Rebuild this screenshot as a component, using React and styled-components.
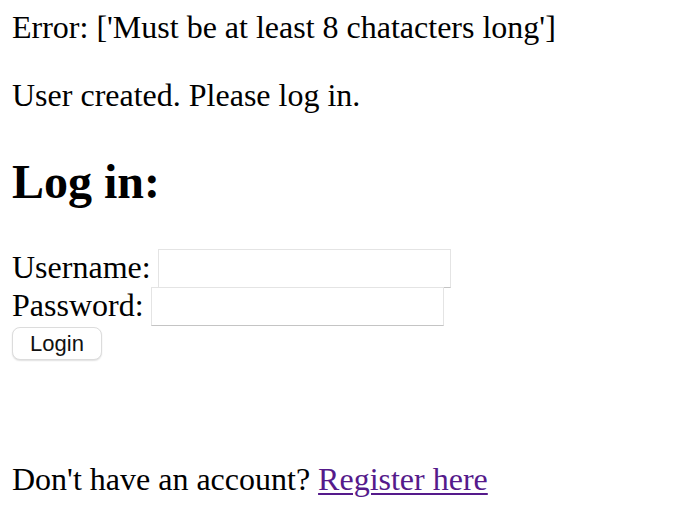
import React from 'react'
import styled, { createGlobalStyle } from 'styled-components'

const GlobalStyle = createGlobalStyle`
  body {
    margin: 0;
    background: #fff;
    color: #000;
    font-family: "Liberation Serif", "Times New Roman", serif;
    font-size: 32px;
  }
`

const Page = styled.div`
  padding: 9px 12px 0;
`

const Message = styled.p`
  margin: ${({ $first }) => ($first ? '0' : '31px 0 0')};
  line-height: 36.8px;
`

const Heading = styled.h2`
  margin: 40px 0 0;
  font-size: 48px;
  font-weight: bold;
  line-height: 55.2px;
`

const Form = styled.form`
  margin-top: 39.8px;
  display: flex;
  flex-direction: column;
`

const Row = styled.label`
  display: flex;
  align-items: flex-start;
  height: 38px;
  line-height: 36.8px;
`

const Input = styled.input`
  box-sizing: border-box;
  width: 293px;
  height: 39px;
  margin: 0 0 0 7px;
  border: 1px solid #e4e4e4;
  border-bottom-color: #c4c4c4;
  border-radius: 0;
  background: #fff;
  font-size: 26px;
  outline: none;
`

const Button = styled.button`
  box-sizing: border-box;
  align-self: flex-start;
  width: 90px;
  height: 33px;
  margin-top: 2.5px;
  padding: 0;
  border: 1px solid #dcdcdc;
  border-radius: 8px;
  background: #fff;
  box-shadow: 0 1px 1.5px rgba(0, 0, 0, 0.12);
  font-family: "Liberation Sans", Arial, sans-serif;
  font-size: 22px;
  color: #111;
`

const Footer = styled.p`
  margin: 101px 0 0;
  line-height: 36.8px;
`

const Link = styled.a`
  color: #551a8b;
  text-decoration: underline;
  text-underline-offset: 3px;
  text-decoration-thickness: 2px;
`

export default function App() {
  return (
    <Page>
      <GlobalStyle />
      <Message $first>Error: ['Must be at least 8 chatacters long']</Message>
      <Message>User created. Please log in.</Message>
      <Heading>Log in:</Heading>
      <Form onSubmit={e => e.preventDefault()}>
        <Row>
          Username:
          <Input type="text" />
        </Row>
        <Row>
          Password:
          <Input type="password" />
        </Row>
        <Button type="submit">Login</Button>
      </Form>
      <Footer>
        Don't have an account? <Link href="#">Register here</Link>
      </Footer>
    </Page>
  )
}
